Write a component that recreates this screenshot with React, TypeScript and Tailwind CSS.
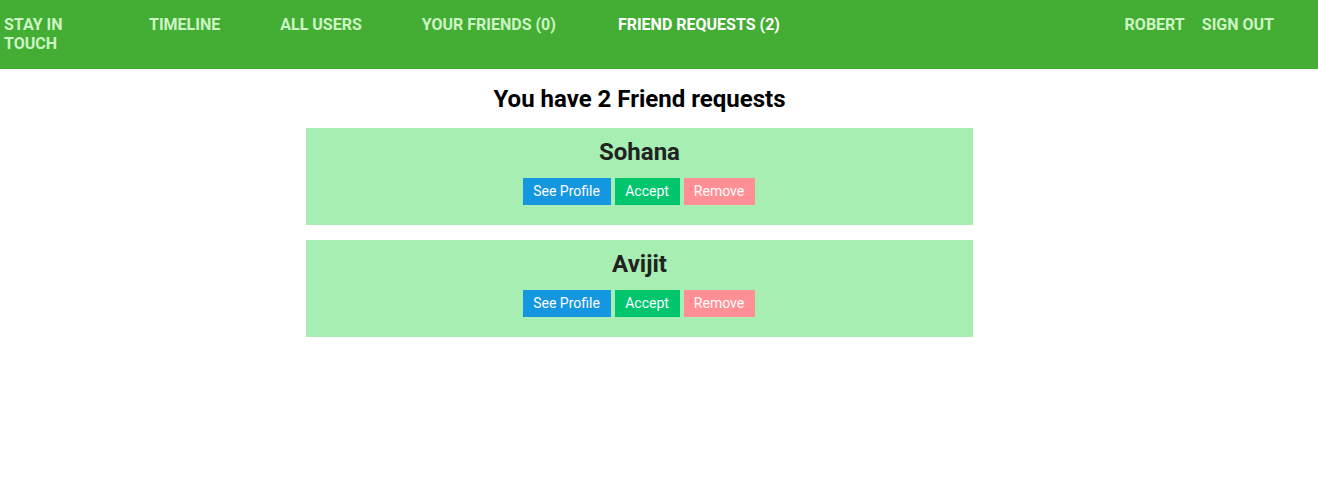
import React from 'react';

const links = [
  { label: 'Timeline', active: false },
  { label: 'All Users', active: false },
  { label: 'Your Friends (0)', active: false },
  { label: 'Friend Requests (2)', active: true },
];

const requests = ['Sohana', 'Avijit'];

export default function App() {
  return (
    <div className="min-h-[486px] bg-white font-['Roboto',sans-serif]">
      {/* Top navigation */}
      <nav className="flex h-[69px] items-start bg-[#43ad34] pt-[15px] pl-[4px] pr-[44px] text-[16px] font-bold uppercase leading-[19px]">
        <a className="w-[85px] text-[#cdf5c4]">Stay in touch</a>
        <div className="ml-[60px] flex gap-[60px]">
          {links.map((link) => (
            <a key={link.label} className={link.active ? 'ml-[2px] text-white' : 'text-[#cdf5c4]'}>
              {link.label}
            </a>
          ))}
        </div>
        <div className="ml-auto flex gap-[17px] text-[#cdf5c4]">
          <a>Robert</a>
          <a>Sign out</a>
        </div>
      </nav>

      <main className="w-[1279px] pt-[16px]">
        <h2 className="text-center text-[24px] font-bold leading-[28px] text-black">You have 2 Friend requests</h2>
        <div className="mx-auto mt-[15px] flex w-[667px] flex-col gap-[15px]">
          {requests.map((name) => (
            <div key={name} className="bg-[#a6eeb1] pt-[10px] pb-[20px] text-center">
              <h3 className="text-[24px] font-bold leading-[28px] text-[#222]">{name}</h3>
              <div className="mt-[12px] flex justify-center gap-[4px] pr-[2px] text-[14px] leading-[27px] text-white">
                <button className="h-[27px] w-[88px] bg-[#1496e0]">See Profile</button>
                <button className="h-[27px] w-[65px] bg-[#00c56c]">Accept</button>
                <button className="h-[27px] w-[71px] bg-[#ff8f94]">Remove</button>
              </div>
            </div>
          ))}
        </div>
      </main>
    </div>
  );
}
